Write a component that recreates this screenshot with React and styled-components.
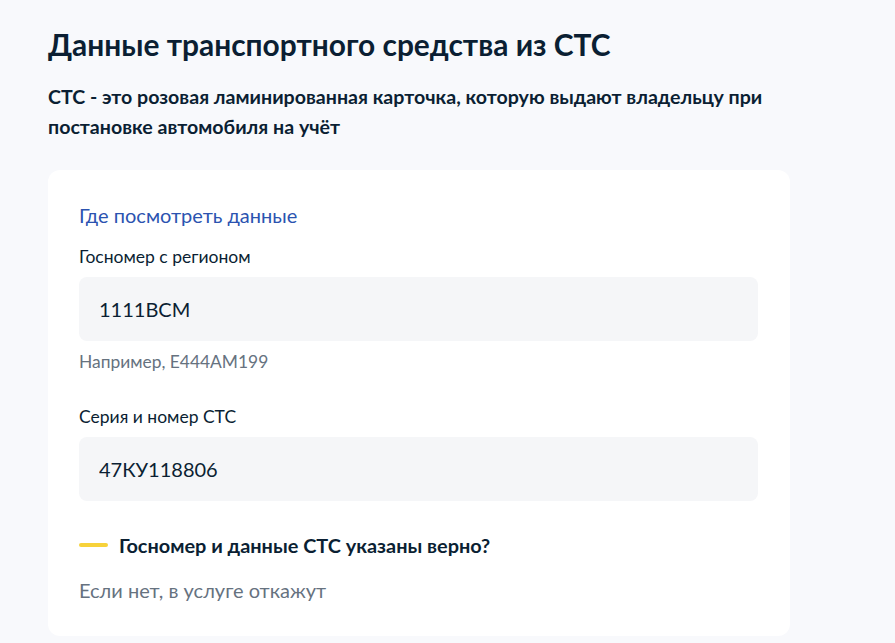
import React from 'react';
import styled, { createGlobalStyle } from 'styled-components';

const GlobalStyle = createGlobalStyle`
  html, body {
    margin: 0;
    padding: 0;
    background: #f8f9fc;
    font-family: Lato, 'Noto Sans', sans-serif;
    color: #0b1f33;
  }
`;

const App = () => {
  return (
    <Page>
      <GlobalStyle />
      <Title>Данные транспортного средства из СТС</Title>
      <Lead>
        СТС - это розовая ламинированная карточка, которую выдают владельцу при
        постановке автомобиля на учёт
      </Lead>
      <Card>
        <HelpLink href="#">Где посмотреть данные</HelpLink>

        <Field>
          <Label>Госномер с регионом</Label>
          <Input defaultValue="1111ВСМ" />
          <Hint>Например, Е444АМ199</Hint>
        </Field>

        <Field $gap={33}>
          <Label>Серия и номер СТС</Label>
          <Input defaultValue="47КУ118806" />
        </Field>

        <Question>
          <Dash />
          <QuestionText>Госномер и данные СТС указаны верно?</QuestionText>
        </Question>
        <Note>Если нет, в услуге откажут</Note>
      </Card>
    </Page>
  );
};

export default App;

const Page = styled.div`
  padding: 26px 0 0 48px;
  min-height: 643px;
  box-sizing: border-box;
`;

const Title = styled.h1`
  margin: 0;
  font-size: 29.9px;
  line-height: 36px;
  font-weight: 700;
`;

const Lead = styled.p`
  margin: 20px 0 0;
  width: 760px;
  font-size: 19.6px;
  line-height: 30px;
  font-weight: 700;
`;

const Card = styled.div`
  margin-top: 28px;
  width: 742px;
  box-sizing: border-box;
  padding: 33px 32px 34px 31px;
  background: #fff;
  border-radius: 12px;
  display: flex;
  flex-direction: column;
`;

const HelpLink = styled.a`
  font-size: 20px;
  line-height: 24px;
  color: #2b53b0;
  text-decoration: none;
`;

const Field = styled.div`
  margin-top: ${p => p.$gap || 18}px;
  display: flex;
  flex-direction: column;
`;

const Label = styled.label`
  font-size: 17.5px;
  line-height: 24px;
  color: #0b1f33;
`;

const Input = styled.input`
  margin-top: 8px;
  height: 64px;
  box-sizing: border-box;
  border: none;
  border-radius: 8px;
  background: #f5f6f8;
  padding: 0 20px;
  font-family: Lato, 'Noto Sans', sans-serif;
  font-size: 20px;
  color: #0b1f33;
  outline: none;
`;

const Hint = styled.div`
  margin-top: 11px;
  font-size: 17.4px;
  line-height: 20px;
  color: #66727f;
`;

const Question = styled.div`
  margin-top: 32px;
  display: flex;
  align-items: center;
  gap: 11px;
`;

const Dash = styled.span`
  width: 29px;
  height: 4px;
  border-radius: 2px;
  background: #f7d23a;
`;

const QuestionText = styled.div`
  font-size: 19.9px;
  line-height: 24px;
  font-weight: 700;
`;

const Note = styled.div`
  margin-top: 21px;
  font-size: 20px;
  line-height: 24px;
  color: #66727f;
`;
